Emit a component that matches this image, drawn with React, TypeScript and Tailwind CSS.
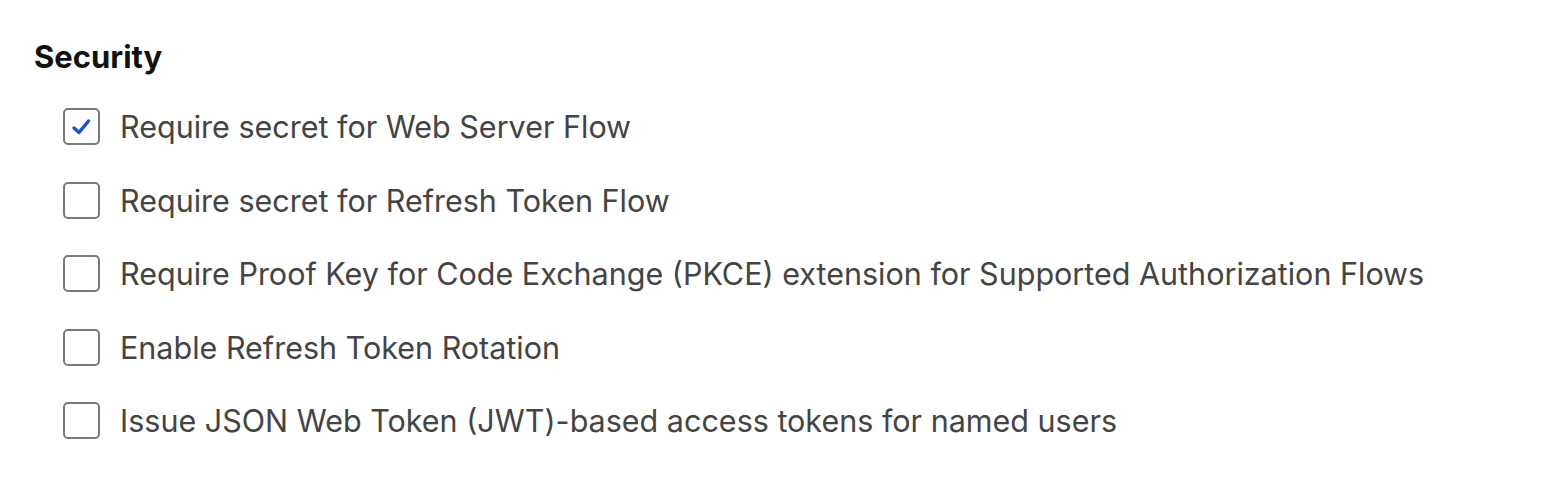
import { useState } from 'react'

const options = [
  { id: 'webServer', label: 'Require secret for Web Server Flow', checked: true },
  { id: 'refresh', label: 'Require secret for Refresh Token Flow', checked: false },
  {
    id: 'pkce',
    label: 'Require Proof Key for Code Exchange (PKCE) extension for Supported Authorization Flows',
    checked: false,
  },
  { id: 'rotation', label: 'Enable Refresh Token Rotation', checked: false },
  { id: 'jwt', label: 'Issue JSON Web Token (JWT)-based access tokens for named users', checked: false },
]

function Checkbox({ checked, onChange }: { checked: boolean; onChange: () => void }) {
  return (
    <button
      type="button"
      onClick={onChange}
      className="flex h-[37px] w-[37px] shrink-0 items-center justify-center rounded-[5px] border-2 border-[#7a7a7a] bg-white"
    >
      {checked && (
        <svg viewBox="0 0 24 24" className="h-[24px] w-[24px]">
          <path d="M4 13 L9 17.5 L18.5 6" fill="none" stroke="#1f4fd1" strokeWidth="3.4" strokeLinecap="round" strokeLinejoin="round" />
        </svg>
      )}
    </button>
  )
}

export default function App() {
  const [state, setState] = useState<Record<string, boolean>>(
    Object.fromEntries(options.map(o => [o.id, o.checked]))
  )

  return (
    <div className="min-h-[484px] bg-white pl-[34px] pt-[37px] font-['Inter','Noto_Sans',sans-serif]">
      <h2 className="text-[31px] font-bold leading-[40px] text-[#111]">Security</h2>
      <div className="mt-[31px] flex flex-col gap-[36.5px] pl-[29px]">
        {options.map(o => (
          <label key={o.id} className="flex items-center gap-[20px]">
            <Checkbox
              checked={state[o.id]}
              onChange={() => setState(s => ({ ...s, [o.id]: !s[o.id] }))}
            />
            <span className="text-[30.5px] leading-[37px] text-[#444]">{o.label}</span>
          </label>
        ))}
      </div>
    </div>
  )
}
